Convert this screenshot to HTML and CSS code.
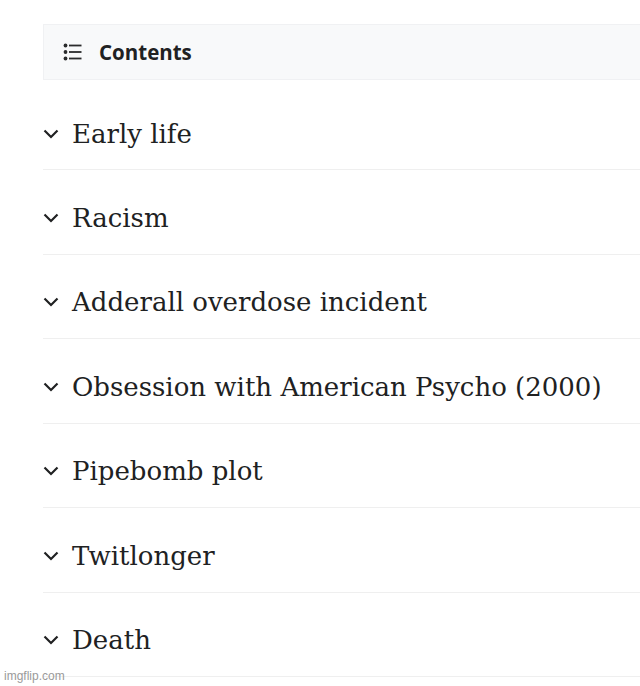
FILE: index.html
```html
<!DOCTYPE html>
<html>
<head>
<meta charset="utf-8">
<link rel="stylesheet" href="styles.css">
</head>
<body>
<nav class="toc">
  <div class="toc-header">
    <svg class="list-icon" width="19" height="18" viewBox="0 0 19 18">
      <circle cx="2.5" cy="2.5" r="1.9" fill="#2a2b2c"/>
      <circle cx="2.5" cy="9" r="1.9" fill="#2a2b2c"/>
      <circle cx="2.5" cy="15.5" r="1.9" fill="#2a2b2c"/>
      <rect x="6" y="1.6" width="12.5" height="1.8" fill="#2a2b2c"/>
      <rect x="6" y="8.1" width="12.5" height="1.8" fill="#2a2b2c"/>
      <rect x="6" y="14.6" width="12.5" height="1.8" fill="#2a2b2c"/>
    </svg>
    <span class="toc-title">Contents</span>
  </div>
  <ul class="toc-list">
    <li class="toc-item first"><svg class="chev" width="16" height="10" viewBox="0 0 16 10"><path d="M1.5 1.5 L8 8 L14.5 1.5" fill="none" stroke="#202122" stroke-width="2.2"/></svg><span>Early life</span></li>
    <li class="toc-item"><svg class="chev" width="16" height="10" viewBox="0 0 16 10"><path d="M1.5 1.5 L8 8 L14.5 1.5" fill="none" stroke="#202122" stroke-width="2.2"/></svg><span>Racism</span></li>
    <li class="toc-item"><svg class="chev" width="16" height="10" viewBox="0 0 16 10"><path d="M1.5 1.5 L8 8 L14.5 1.5" fill="none" stroke="#202122" stroke-width="2.2"/></svg><span>Adderall overdose incident</span></li>
    <li class="toc-item"><svg class="chev" width="16" height="10" viewBox="0 0 16 10"><path d="M1.5 1.5 L8 8 L14.5 1.5" fill="none" stroke="#202122" stroke-width="2.2"/></svg><span>Obsession with American Psycho (2000)</span></li>
    <li class="toc-item"><svg class="chev" width="16" height="10" viewBox="0 0 16 10"><path d="M1.5 1.5 L8 8 L14.5 1.5" fill="none" stroke="#202122" stroke-width="2.2"/></svg><span>Pipebomb plot</span></li>
    <li class="toc-item"><svg class="chev" width="16" height="10" viewBox="0 0 16 10"><path d="M1.5 1.5 L8 8 L14.5 1.5" fill="none" stroke="#202122" stroke-width="2.2"/></svg><span>Twitlonger</span></li>
    <li class="toc-item"><svg class="chev" width="16" height="10" viewBox="0 0 16 10"><path d="M1.5 1.5 L8 8 L14.5 1.5" fill="none" stroke="#202122" stroke-width="2.2"/></svg><span>Death</span></li>
  </ul>
</nav>
<div class="watermark">imgflip.com</div>
</body>
</html>
```
FILE: styles.css
```css
html, body {
  margin: 0;
  padding: 0;
  background: #ffffff;
}
body {
  width: 640px;
  height: 686px;
  overflow: hidden;
  position: relative;
  color: #202122;
}
.toc {
  margin-left: 43px;
  padding-top: 24px;
}
.toc-header {
  display: flex;
  align-items: center;
  height: 54px;
  padding-left: 19px;
  background: #f8f9fa;
  border: 1px solid #f0f1f3;
  border-right: none;
}
.list-icon {
  flex: none;
  margin-right: 17px;
}
.toc-title {
  font-family: "Open Sans", sans-serif;
  font-weight: 700;
  font-size: 20.5px;
  color: #202122;
  letter-spacing: 0;
}
.toc-list {
  list-style: none;
  margin: 0;
  padding: 0;
}
.toc-item {
  display: flex;
  align-items: center;
  height: 84.5px;
  box-sizing: border-box;
  border-bottom: 1px solid #efefef;
  font-family: "DejaVu Serif", Georgia, serif;
  font-size: 26px;
  color: #202122;
  padding-top: 12px;
}
.toc-item.first {
  height: 90px;
  padding-top: 18px;
}
.chev {
  flex: none;
  margin-right: 13px;
}
.watermark {
  position: absolute;
  left: 4px;
  bottom: 3px;
  font-family: "Liberation Sans", sans-serif;
  font-size: 12px;
  color: #9a9a9a;
}
```
